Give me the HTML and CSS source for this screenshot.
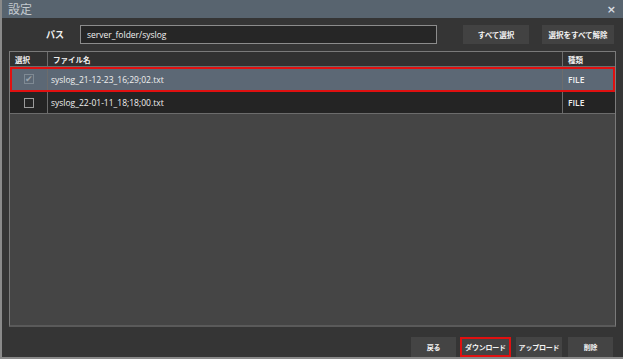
FILE: index.html
```html
<!DOCTYPE html>
<html lang="ja">
<head>
    <meta charset="UTF-8">
    <title>設定</title>
    <link rel="stylesheet" href="styles.css">
</head>
<body>
    <div class="dialog">
        <div class="titlebar">
            <span class="title">設定</span>
            <span class="close">×</span>
        </div>

        <div class="path-row">
            <span class="path-label">パス</span>
            <div class="path-input">server_folder/syslog</div>
            <button class="btn select-all">すべて選択</button>
            <button class="btn clear-all">選択をすべて解除</button>
        </div>

        <div class="file-table">
            <div class="row head">
                <div class="cell c-check">選択</div>
                <div class="cell c-name">ファイル名</div>
                <div class="cell c-type">種類</div>
            </div>
            <div class="row selected">
                <div class="cell c-check"><span class="checkbox checked">✔</span></div>
                <div class="cell c-name">syslog_21-12-23_16;29;02.txt</div>
                <div class="cell c-type">FILE</div>
            </div>
            <div class="row">
                <div class="cell c-check"><span class="checkbox"></span></div>
                <div class="cell c-name">syslog_22-01-11_18;18;00.txt</div>
                <div class="cell c-type">FILE</div>
            </div>
            <div class="table-fill"></div>
        </div>

        <div class="footer">
            <button class="btn back">戻る</button>
            <button class="btn marked">ダウンロード</button>
            <button class="btn upload">アップロード</button>
            <button class="btn">削除</button>
        </div>
    </div>
</body>
</html>
```

FILE: styles.css
```css
* {
    margin: 0;
    padding: 0;
    box-sizing: border-box;
}

body {
    font-family: 'Noto Sans CJK JP', 'Noto Sans', sans-serif;
    background: #333;
    color: #f0f0f0;
    width: 623px;
    height: 359px;
    overflow: hidden;
}

.dialog {
    width: 623px;
    height: 359px;
    display: flex;
    flex-direction: column;
    background: #353535;
    border-left: 2px solid #8a8a8a;
    border-bottom: 2px solid #8a8a8a;
}

.titlebar {
    height: 18px;
    background: #58646f;
    display: flex;
    align-items: center;
    justify-content: space-between;
    padding: 0 7px 0 6px;
}

.title {
    font-size: 12px;
    color: #c5cad0;
    line-height: 1;
}

.close {
    font-family: 'DejaVu Sans', sans-serif;
    font-size: 11px;
    font-weight: bold;
    color: #d8dde2;
}

.path-row {
    display: flex;
    align-items: center;
    height: 33px;
    padding: 0 9px 0 44px;
}

.path-label {
    font-size: 9px;
    font-weight: bold;
    width: 34px;
}

.path-input {
    width: 357px;
    height: 19px;
    background: #262626;
    border: 1px solid #8c8c8c;
    font-family: 'Open Sans', 'Noto Sans', sans-serif;
    font-size: 8.5px;
    line-height: 17px;
    padding-left: 6px;
    color: #f2f2f2;
}

.btn {
    font-family: 'Noto Sans CJK JP', sans-serif;
    font-size: 7.5px;
    font-weight: bold;
    color: #f4f4f4;
    background: #424242;
    border: none;
    height: 19px;
    padding: 0;
    white-space: nowrap;
}

.select-all {
    width: 66px;
    margin-left: 26px;
}

.clear-all {
    width: 72px;
    margin-left: 13px;
}

.file-table {
    flex: 1;
    margin: 0 7px 0 7px;
    display: flex;
    flex-direction: column;
    border: 1px solid #7a7a7a;
    border-bottom: 2px solid #5a5a5a;
    background: #454545;
}

.row {
    display: flex;
    height: 22px;
    background: #242424;
    border-bottom: 1px solid #6c6c6c;
    font-size: 8.5px;
}

.row.head {
    height: 15px;
    background: #313131;
    font-size: 7.5px;
    font-weight: bold;
}

.row.selected {
    height: 25px;
    background: #5c6875;
    outline: 2px solid #e01010;
    outline-offset: -2px;
    position: relative;
}

.cell {
    display: flex;
    align-items: center;
    padding-left: 3px;
    font-family: 'Open Sans', 'Noto Sans CJK JP', sans-serif;
}

.head .cell {
    font-family: 'Noto Sans CJK JP', sans-serif;
    padding-left: 5px;
}

.c-check {
    width: 38px;
    border-right: 1px solid #6c6c6c;
}

.row:not(.head) .c-check {
    justify-content: center;
    padding-left: 0;
}

.c-name {
    flex: 1;
    border-right: 1px solid #6c6c6c;
}

.c-type {
    width: 52px;
    font-weight: 600;
    padding-left: 5px;
}

.checkbox {
    width: 10px;
    height: 10px;
    border: 1px solid #9a9a9a;
    font-size: 9px;
    line-height: 8px;
    color: #9aa2aa;
    text-align: center;
}

.checkbox.checked {
    border-color: #7f8a94;
}

.table-fill {
    flex: 1;
}

.footer {
    height: 30px;
    display: flex;
    align-items: flex-end;
    justify-content: flex-end;
    padding-right: 10px;
}

.footer .btn {
    width: 45px;
    height: 20px;
    font-size: 7px;
    letter-spacing: -0.2px;
    background: #444;
    margin-left: 6px;
}

.footer .btn.marked {
    width: 51px;
    margin-left: 4px;
    outline: 2px solid #e01010;
    outline-offset: -2px;
}

.footer .btn.upload {
    width: 46px;
    margin-left: 5px;
}
```
